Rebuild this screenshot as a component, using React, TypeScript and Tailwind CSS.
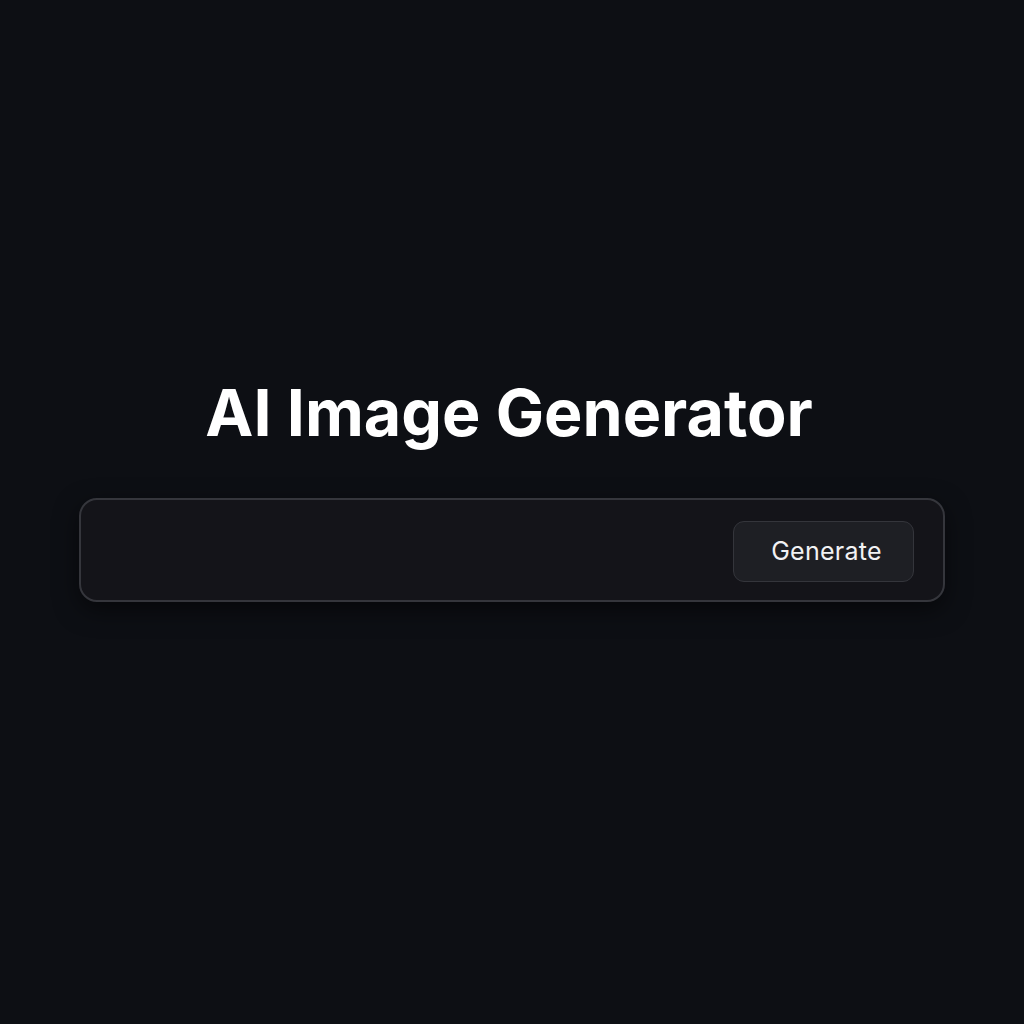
import React, { useState } from 'react';

export default function App() {
  const [prompt, setPrompt] = useState('');

  return (
    <div
      className="min-h-screen w-full bg-[#0d0f14] flex flex-col items-center pt-[375px]"
      style={{ fontFamily: 'Inter, "Noto Sans", sans-serif' }}
    >
      {/* Title */}
      <h1 className="text-[64.5px] leading-[76px] font-bold text-white pr-[6px]">AI Image Generator</h1>

      {/* Prompt bar */}
      <div className="mt-[47px] w-[866px] h-[104px] rounded-[18px] border-2 border-[#35363c] bg-[#141419] shadow-[0_8px_24px_rgba(0,0,0,0.5)] flex items-center pl-6 pr-[29px]">
        <input
          value={prompt}
          onChange={(e) => setPrompt(e.target.value)}
          className="flex-1 bg-transparent outline-none text-white text-xl"
        />
        <button className="ml-4 w-[181px] h-[61px] pl-[6px] pt-[2px] rounded-[11px] border border-[#34353b] bg-[#1e1f24] text-[#f2f2f4] text-[25px] tracking-[0.01em] translate-y-[1px]">
          Generate
        </button>
      </div>
    </div>
  );
}
